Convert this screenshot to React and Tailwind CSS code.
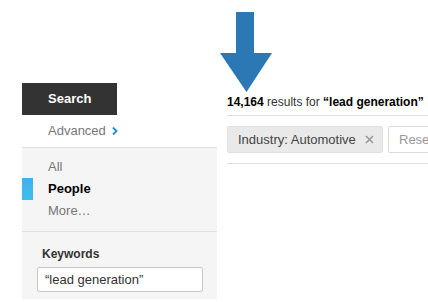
export default function App() {
  return (
    <div className="relative flex w-[428px] h-[302px] overflow-hidden bg-white pl-[22px] font-['Liberation_Sans',Arial,sans-serif] text-[13px] text-[#333]">
      {/* left rail */}
      <div className="w-[195px] shrink-0 pt-[83px] flex flex-col">
        <div className="w-[95px] h-[32px] bg-[#333] text-white font-bold flex items-center pl-[26px]">Search</div>
        <div className="h-[32px] flex items-center pl-[26px] text-[#777]">
          Advanced
          <svg width="8" height="10" viewBox="0 0 8 10" className="ml-[5px]">
            <path d="M2 1.5 L5.5 5 L2 8.5" fill="none" stroke="#1a8ed6" strokeWidth="1.8" />
          </svg>
        </div>
        <div className="bg-[#f5f5f5] border-t border-[#dedede]">
          <div className="pt-[8px] pb-[9px] leading-[22px] border-b border-[#dedede]">
            <div className="pl-[26px] text-[#777]">All</div>
            <div className="flex">
              <span className="w-[11px] bg-gradient-to-b from-[#46aee9] to-[#3bc0ec]" />
              <span className="pl-[15px] font-bold text-black">People</span>
            </div>
            <div className="pl-[26px] text-[#777]">More…</div>
          </div>
          <div className="pt-[14px] pb-[7px] pl-[15px] pr-[14px]">
            <div className="pl-[5px] leading-[16px] text-[12px] font-bold text-[#333]">Keywords</div>
            <div className="mt-[5px] h-[25px] bg-white border border-[#c8c8c8] rounded-[2px] flex items-center pl-[7px] text-[#333]">
              “lead generation”
            </div>
          </div>
        </div>
      </div>

      {/* results column */}
      <div className="flex-1 ml-[10px] pt-[94px] flex flex-col">
        <div className="leading-[16px] pb-[5px] border-b border-[#dedede] whitespace-nowrap text-[12px]">
          <span className="font-bold text-black">14,164</span> results for <span className="font-bold text-black">“lead generation”</span>
        </div>
        <div className="flex gap-[5px] pt-[10px] pb-[10px] border-b border-[#dedede] whitespace-nowrap">
          <div className="h-[27px] w-[156px] shrink-0 bg-[#e9e9e9] border border-[#e0e0e0] rounded-[2px] flex items-center pl-[10px] text-[#444]">
            Industry: Automotive
            <svg width="9" height="9" viewBox="0 0 9 9" className="ml-[9px]">
              <path d="M1 1 L8 8 M8 1 L1 8" stroke="#999" strokeWidth="1.6" />
            </svg>
          </div>
          <div className="h-[27px] shrink-0 bg-white border border-[#dcdcdc] rounded-[2px] flex items-center pl-[10px] pr-[10px] text-[#999]">
            Reset
          </div>
        </div>
      </div>

      {/* pointer arrow overlay */}
      <svg className="absolute left-[220px] top-[12px]" width="53" height="81" viewBox="0 0 53 81">
        <path d="M16 0 H34 V41 H52 L26.5 80 L0 41 H16 Z" fill="#2b78b4" />
      </svg>
    </div>
  );
}
